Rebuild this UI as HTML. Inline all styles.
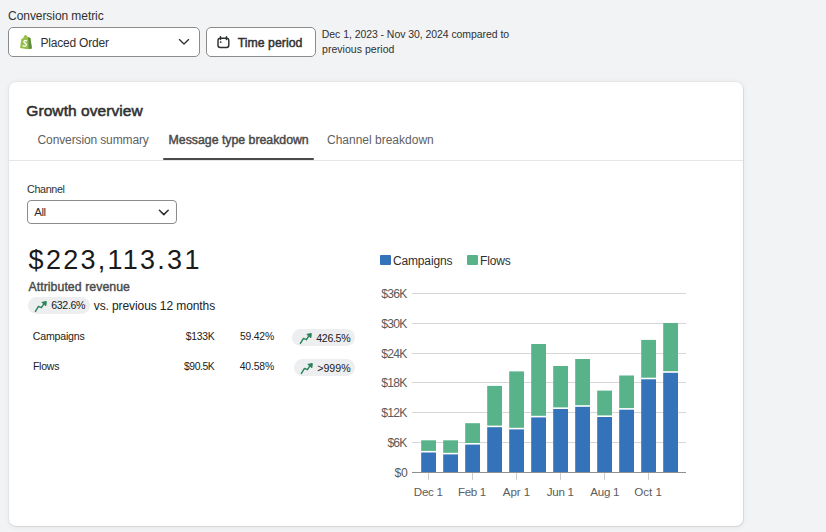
<!DOCTYPE html>
<html><head><meta charset="utf-8"><style>
html,body{margin:0;padding:0;}
body{width:826px;height:532px;overflow:hidden;background:#f2f3f5;position:relative;font-family:"Liberation Sans", sans-serif;}
.t{position:absolute;white-space:nowrap;line-height:1;}
.box{position:absolute;background:#fff;border:1px solid #8c8c8c;box-sizing:content-box;}
</style></head><body>
<div class="t" style="left:8.09px;top:10.00px;font-size:12px;color:#303030;letter-spacing:-0.067px;">Conversion metric</div>
<div class="box" style="left:8px;top:27px;width:190px;height:28px;border-radius:5px;"></div>
<svg style="position:absolute;left:19px;top:34px" width="14" height="16" viewBox="0 0 14 16">
<path d="M1.1 13.9 L2.3 4.9 L4.3 4.0 C4.8 2.4 5.5 1.1 6.5 1.0 C7.4 1.0 8.2 2.0 8.7 3.3 L11.4 4.0 L12.9 14.6 L8.4 15.3 Z" fill="#95bf47"/>
<path d="M9.2 2.9 L11.4 4.0 L12.9 14.6 L9.6 15.1 Z" fill="#5e8e3e"/>
<path d="M7.5 6.9 C7.0 6.3 4.9 6.2 4.9 7.8 C4.9 9.3 7.4 9.1 7.4 10.8 C7.4 12.4 5.1 12.5 4.1 11.7" fill="none" stroke="#fff" stroke-width="1.3" stroke-linecap="round"/>
</svg>
<div class="t" style="left:40.42px;top:37.00px;font-size:12px;color:#303030;letter-spacing:-0.201px;">Placed Order</div>
<svg style="position:absolute;left:177px;top:37px" width="14" height="10" viewBox="0 0 14 10"><path d="M2.4 2.6 L7 7.0 L11.6 2.6" fill="none" stroke="#303030" stroke-width="1.35" stroke-linecap="round" stroke-linejoin="round"/></svg>
<div class="box" style="left:206px;top:27px;width:108px;height:28px;border-radius:5px;"></div>
<svg style="position:absolute;left:215px;top:34px" width="16" height="16" viewBox="0 0 16 16">
<rect x="3.0" y="4.2" width="10.8" height="9.2" rx="2.2" fill="none" stroke="#303030" stroke-width="1.45"/>
<path d="M5.5 2.7 V5.4 M11.5 2.7 V5.4" stroke="#303030" stroke-width="1.5" stroke-linecap="round"/>
<circle cx="5.7" cy="8.1" r="0.9" fill="#303030"/>
</svg>
<div class="t" style="left:237.72px;top:37.00px;font-size:12.3px;color:#303030;letter-spacing:0.013px;-webkit-text-stroke:0.45px #303030;">Time period</div>
<div class="t" style="left:321.84px;top:29.00px;font-size:10.5px;color:#303030;letter-spacing:-0.065px;">Dec 1, 2023 - Nov 30, 2024 compared to</div>
<div class="t" style="left:322.02px;top:44.00px;font-size:10.5px;color:#303030;letter-spacing:0.040px;">previous period</div>
<div id="card" style="position:absolute;left:9px;top:82px;width:734px;height:444px;background:#fff;border-radius:7px;box-shadow:0 0 0 0.5px rgba(0,0,0,0.06), 0.5px 1px 1px rgba(0,0,0,0.06), 0 0.5px 6px rgba(0,0,0,0.06), inset 0 0 4px rgba(0,0,0,0.015);"></div>
<div class="t" style="left:26.32px;top:103.00px;font-size:15.5px;color:#303030;letter-spacing:0.073px;-webkit-text-stroke:0.55px #303030;">Growth overview</div>
<div class="t" style="left:37.59px;top:134.00px;font-size:12px;color:#616161;letter-spacing:-0.126px;">Conversion summary</div>
<div class="t" style="left:168.59px;top:134.00px;font-size:12.3px;color:#4a4a4a;-webkit-text-stroke:0.45px #4a4a4a;">Message type breakdown</div>
<div class="t" style="left:326.99px;top:134.00px;font-size:12px;color:#616161;">Channel breakdown</div>
<div style="position:absolute;left:9px;top:160px;width:734px;height:1px;background:#e6e6e6"></div>
<div style="position:absolute;left:163px;top:158px;width:151px;height:2px;background:#4a4a4a;border-radius:1px"></div>
<div class="t" style="left:27.05px;top:184.00px;font-size:10.8px;color:#303030;letter-spacing:-0.393px;">Channel</div>
<div class="box" style="left:27px;top:200px;width:148px;height:22px;border-radius:4px;"></div>
<div class="t" style="left:34.18px;top:207.00px;font-size:11.5px;color:#303030;letter-spacing:-0.394px;">All</div>
<svg style="position:absolute;left:157px;top:206.6px" width="14" height="12" viewBox="0 0 14 12"><path d="M2.4 3.2 L6.8 7.6 L11.2 3.2" fill="none" stroke="#303030" stroke-width="1.5" stroke-linecap="round" stroke-linejoin="round"/></svg>
<div class="t" style="left:28.61px;top:247.00px;font-size:27px;color:#1a1a1a;letter-spacing:2.266px;">$223,113.31</div>
<div class="t" style="left:28.48px;top:281.00px;font-size:12.3px;color:#4a4a4a;letter-spacing:0.056px;-webkit-text-stroke:0.4px #4a4a4a;">Attributed revenue</div>
<div style="position:absolute;left:27.5px;top:296.5px;width:62.7px;height:17.0px;border-radius:9px;background:#edeef0"></div>
<svg style="position:absolute;left:31.60px;top:298.50px" width="16" height="16" viewBox="0 0 16 16">
<path d="M3.4 12.4 L6.5 7.4 L9.4 8.7 L12.4 4.2" fill="none" stroke="#29845a" stroke-width="1.45" stroke-linecap="round" stroke-linejoin="round"/>
<path d="M10.2 3.3 L14.3 2.5 L13.9 6.4 Z" fill="#29845a" stroke="#29845a" stroke-width="1.0" stroke-linejoin="round" stroke-linecap="round"/>
</svg>
<div class="t" style="left:51.26px;top:300.00px;font-size:10.6px;color:#202020;letter-spacing:-0.347px;">632.6%</div>
<div class="t" style="left:93.76px;top:300.00px;font-size:12px;color:#222222;letter-spacing:-0.096px;">vs. previous 12 months</div>
<div class="t" style="left:32.76px;top:331.00px;font-size:10.6px;color:#222222;letter-spacing:-0.199px;">Campaigns</div>
<div class="t" style="left:185.79px;top:332.00px;font-size:10.4px;color:#222222;letter-spacing:-0.261px;">$133K</div>
<div class="t" style="left:240.08px;top:332.00px;font-size:10.4px;color:#222222;letter-spacing:-0.237px;">59.42%</div>
<div style="position:absolute;left:292.4px;top:329px;width:63.0px;height:17px;border-radius:9px;background:#edeef0"></div>
<svg style="position:absolute;left:296.50px;top:331.00px" width="16" height="16" viewBox="0 0 16 16">
<path d="M3.4 12.4 L6.5 7.4 L9.4 8.7 L12.4 4.2" fill="none" stroke="#29845a" stroke-width="1.45" stroke-linecap="round" stroke-linejoin="round"/>
<path d="M10.2 3.3 L14.3 2.5 L13.9 6.4 Z" fill="#29845a" stroke="#29845a" stroke-width="1.0" stroke-linejoin="round" stroke-linecap="round"/>
</svg>
<div class="t" style="left:316.26px;top:333.00px;font-size:10.6px;color:#202020;letter-spacing:-0.326px;">426.5%</div>
<div class="t" style="left:32.93px;top:361.00px;font-size:10.6px;color:#222222;letter-spacing:-0.282px;">Flows</div>
<div class="t" style="left:183.99px;top:362.00px;font-size:10.4px;color:#222222;letter-spacing:-0.427px;">$90.5K</div>
<div class="t" style="left:239.76px;top:362.00px;font-size:10.4px;color:#222222;letter-spacing:-0.173px;">40.58%</div>
<div style="position:absolute;left:293.8px;top:359.3px;width:61.39999999999998px;height:16.80000000000001px;border-radius:9px;background:#edeef0"></div>
<svg style="position:absolute;left:297.90px;top:361.30px" width="16" height="16" viewBox="0 0 16 16">
<path d="M3.4 12.4 L6.5 7.4 L9.4 8.7 L12.4 4.2" fill="none" stroke="#29845a" stroke-width="1.45" stroke-linecap="round" stroke-linejoin="round"/>
<path d="M10.2 3.3 L14.3 2.5 L13.9 6.4 Z" fill="#29845a" stroke="#29845a" stroke-width="1.0" stroke-linejoin="round" stroke-linecap="round"/>
</svg>
<div class="t" style="left:317.28px;top:363.00px;font-size:10.6px;color:#202020;">&gt;999%</div>
<div style="position:absolute;left:380px;top:255.2px;width:10.5px;height:9.5px;background:#3472ba;border-radius:1px"></div>
<div class="t" style="left:392.99px;top:255.00px;font-size:12px;color:#303030;letter-spacing:-0.157px;">Campaigns</div>
<div style="position:absolute;left:467.2px;top:255.2px;width:10.8px;height:9.5px;background:#58b28a;border-radius:1px"></div>
<div class="t" style="left:480.02px;top:255.00px;font-size:12px;color:#303030;letter-spacing:-0.179px;">Flows</div>
<div class="t" style="left:394.57px;top:467.00px;font-size:12.2px;color:#5a5a5a;letter-spacing:-0.462px;">$0</div>
<div class="t" style="left:387.47px;top:437.00px;font-size:12.2px;color:#5a5a5a;letter-spacing:-0.920px;">$6K</div>
<div class="t" style="left:381.27px;top:407.00px;font-size:12.2px;color:#5a5a5a;letter-spacing:-0.808px;">$12K</div>
<div class="t" style="left:381.27px;top:377.00px;font-size:12.2px;color:#5a5a5a;letter-spacing:-0.808px;">$18K</div>
<div class="t" style="left:381.27px;top:348.00px;font-size:12.2px;color:#5a5a5a;letter-spacing:-0.808px;">$24K</div>
<div class="t" style="left:381.27px;top:318.00px;font-size:12.2px;color:#5a5a5a;letter-spacing:-0.808px;">$30K</div>
<div class="t" style="left:381.27px;top:288.00px;font-size:12.2px;color:#5a5a5a;letter-spacing:-0.808px;">$36K</div>
<svg style="position:absolute;left:0;top:0" width="826" height="532">
<line x1="412" x2="686" y1="442.5" y2="442.5" stroke="#d6d6d6" stroke-width="1"/>
<line x1="412" x2="686" y1="412.5" y2="412.5" stroke="#d6d6d6" stroke-width="1"/>
<line x1="412" x2="686" y1="382.5" y2="382.5" stroke="#d6d6d6" stroke-width="1"/>
<line x1="412" x2="686" y1="353.5" y2="353.5" stroke="#d6d6d6" stroke-width="1"/>
<line x1="412" x2="686" y1="323.5" y2="323.5" stroke="#d6d6d6" stroke-width="1"/>
<line x1="412" x2="686" y1="293.5" y2="293.5" stroke="#d6d6d6" stroke-width="1"/>
<line x1="412" x2="686" y1="472.5" y2="472.5" stroke="#8f8f8f" stroke-width="1"/>
<rect x="421.2" y="440.30" width="14.8" height="10.60" fill="#58b28a"/>
<rect x="421.2" y="452.50" width="14.8" height="19.50" fill="#3472ba"/>
<rect x="443.2" y="440.30" width="14.8" height="12.50" fill="#58b28a"/>
<rect x="443.2" y="454.40" width="14.8" height="17.60" fill="#3472ba"/>
<rect x="465.2" y="423.20" width="14.8" height="19.80" fill="#58b28a"/>
<rect x="465.2" y="444.60" width="14.8" height="27.40" fill="#3472ba"/>
<rect x="487.2" y="385.90" width="14.8" height="39.70" fill="#58b28a"/>
<rect x="487.2" y="427.20" width="14.8" height="44.80" fill="#3472ba"/>
<rect x="509.2" y="371.40" width="14.8" height="56.40" fill="#58b28a"/>
<rect x="509.2" y="429.40" width="14.8" height="42.60" fill="#3472ba"/>
<rect x="531.2" y="344.00" width="14.8" height="71.80" fill="#58b28a"/>
<rect x="531.2" y="417.40" width="14.8" height="54.60" fill="#3472ba"/>
<rect x="553.2" y="366.00" width="14.8" height="41.40" fill="#58b28a"/>
<rect x="553.2" y="409.00" width="14.8" height="63.00" fill="#3472ba"/>
<rect x="575.2" y="359.00" width="14.8" height="46.20" fill="#58b28a"/>
<rect x="575.2" y="406.80" width="14.8" height="65.20" fill="#3472ba"/>
<rect x="597.2" y="390.60" width="14.8" height="24.80" fill="#58b28a"/>
<rect x="597.2" y="417.00" width="14.8" height="55.00" fill="#3472ba"/>
<rect x="619.2" y="375.50" width="14.8" height="32.60" fill="#58b28a"/>
<rect x="619.2" y="409.70" width="14.8" height="62.30" fill="#3472ba"/>
<rect x="641.2" y="339.90" width="14.8" height="37.80" fill="#58b28a"/>
<rect x="641.2" y="379.30" width="14.8" height="92.70" fill="#3472ba"/>
<rect x="663.2" y="323.00" width="14.8" height="48.20" fill="#58b28a"/>
<rect x="663.2" y="372.80" width="14.8" height="99.20" fill="#3472ba"/>
<line x1="428.5" x2="428.5" y1="473" y2="480" stroke="#cdcdcd" stroke-width="1"/>
<line x1="472.5" x2="472.5" y1="473" y2="480" stroke="#cdcdcd" stroke-width="1"/>
<line x1="516.5" x2="516.5" y1="473" y2="480" stroke="#cdcdcd" stroke-width="1"/>
<line x1="560.5" x2="560.5" y1="473" y2="480" stroke="#cdcdcd" stroke-width="1"/>
<line x1="604.5" x2="604.5" y1="473" y2="480" stroke="#cdcdcd" stroke-width="1"/>
<line x1="648.5" x2="648.5" y1="473" y2="480" stroke="#cdcdcd" stroke-width="1"/>
</svg>
<div class="t" style="left:413.85px;top:486.00px;font-size:11.6px;color:#5c5c5c;letter-spacing:-0.296px;">Dec 1</div>
<div class="t" style="left:457.95px;top:486.00px;font-size:11.6px;color:#5c5c5c;letter-spacing:-0.336px;">Feb 1</div>
<div class="t" style="left:502.83px;top:486.00px;font-size:11.6px;color:#5c5c5c;letter-spacing:-0.109px;">Apr 1</div>
<div class="t" style="left:546.77px;top:486.00px;font-size:11.6px;color:#5c5c5c;letter-spacing:-0.282px;">Jun 1</div>
<div class="t" style="left:590.23px;top:486.00px;font-size:11.6px;color:#5c5c5c;letter-spacing:-0.256px;">Aug 1</div>
<div class="t" style="left:634.15px;top:486.00px;font-size:11.6px;color:#5c5c5c;letter-spacing:0.049px;">Oct 1</div>
</body></html>
